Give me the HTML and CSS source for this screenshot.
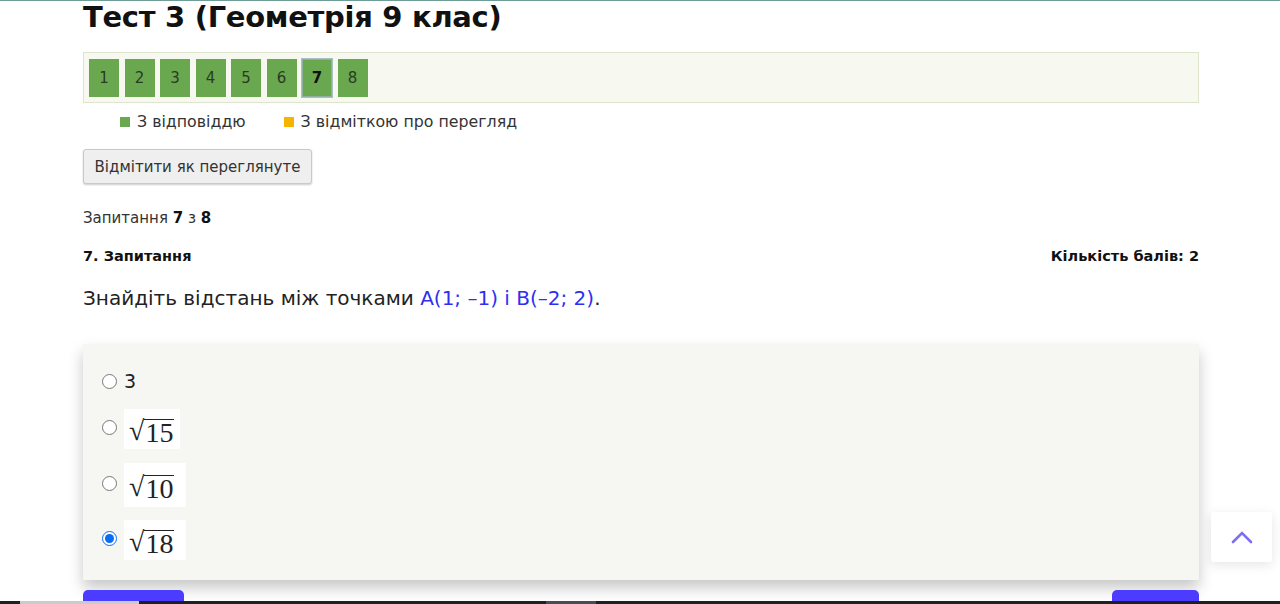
FILE: index.html
```html
<!DOCTYPE html>
<html lang="uk">
<head>
<meta charset="utf-8">
<title>Тест 3 (Геометрія 9 клас)</title>
<link rel="stylesheet" href="styles.css">
</head>
<body>
<div class="topline"></div>
<main class="page">
  <h1 class="title">Тест 3 (Геометрія 9 клас)</h1>
  <nav class="qnav">
    <span class="qbtn">1</span>
    <span class="qbtn">2</span>
    <span class="qbtn">3</span>
    <span class="qbtn">4</span>
    <span class="qbtn">5</span>
    <span class="qbtn">6</span>
    <span class="qbtn current">7</span>
    <span class="qbtn">8</span>
  </nav>
  <div class="legend">
    <span class="legend-item"><i class="sq green"></i>З відповіддю</span>
    <span class="legend-item"><i class="sq yellow"></i>З відміткою про перегляд</span>
  </div>
  <button class="mark">Відмітити як переглянуте</button>
  <p class="counter">Запитання <b>7</b> з <b>8</b></p>
  <div class="qhead">
    <b>7. Запитання</b>
    <b>Кількість балів: 2</b>
  </div>
  <p class="qtext">Знайдіть відстань між точками <span class="blue">A(1; –1) і B(–2; 2)</span>.</p>
  <div class="answers">
    <label class="ans first"><input type="radio" name="a"><span class="plain">3</span></label>
    <label class="ans a2"><input type="radio" name="a"><span class="math"><span class="rad">√</span><span class="under">15</span></span></label>
    <label class="ans a3"><input type="radio" name="a"><span class="math"><span class="rad">√</span><span class="under">10</span></span></label>
    <label class="ans a4"><input type="radio" name="a" checked><span class="math"><span class="rad">√</span><span class="under">18</span></span></label>
  </div>
  <div class="actions">
    <span class="pbtn left"></span>
    <span class="pbtn right"></span>
  </div>
</main>
<button class="totop" aria-label="Вгору">
  <svg width="22" height="14" viewBox="0 0 22 14"><path d="M2 12 L11 3 L20 12" fill="none" stroke="#7d6ff2" stroke-width="2.6" stroke-linecap="round"/></svg>
</button>
<div class="bottombar"><span class="thumb"></span><span class="thumb2"></span></div>
</body>
</html>
```
FILE: styles.css
```css
* { box-sizing: border-box; }
html, body { margin: 0; padding: 0; }
body {
  font-family: "DejaVu Sans", "Noto Sans", sans-serif;
  color: #222;
  background: #fff;
  height: 604px;
  overflow: hidden;
}
.topline {
  height: 1px;
  background: #6f9e98;
}
.page {
  width: 1116px;
  margin-left: 83px;
}
.title {
  margin: -4px 0 0 0;
  font-size: 29px;
  line-height: 40px;
  font-weight: bold;
  color: #111;
  letter-spacing: -0.3px;
}
.qnav {
  margin-top: 15px;
  height: 51px;
  border: 1px solid #dde5cc;
  background: #f7f9f0;
  display: flex;
  align-items: center;
  gap: 5.5px;
  padding: 0 5px;
}
.qbtn {
  width: 30px;
  height: 38px;
  background: #6aa84f;
  color: #2b3a24;
  font-size: 15px;
  display: flex;
  align-items: center;
  justify-content: center;
}
.qbtn.current {
  font-weight: bold;
  color: #111;
  outline: 1px solid #a9bfc4;
  box-shadow: inset 0 0 0 1px #8fb0a0;
}
.legend {
  display: flex;
  gap: 38px;
  padding-left: 37px;
  margin-top: 9px;
  font-size: 15.8px;
  color: #333;
  line-height: 20px;
}
.legend-item { display: flex; align-items: center; }
.sq { display: inline-block; width: 10px; height: 10px; margin-right: 7px; }
.sq.green { background: #6aa84f; }
.sq.yellow { background: #f5b400; }
.mark {
  display: block;
  margin-top: 17px;
  height: 35px;
  width: 229px;
  padding: 0;
  font-family: inherit;
  font-size: 15px;
  color: #333;
  background: #efefef;
  border: 1px solid #c9c9c9;
  border-radius: 3px;
  box-shadow: 0 1px 2px rgba(0,0,0,0.2);
}
.counter {
  margin: 24px 0 0;
  font-size: 15px;
  line-height: 20px;
  color: #333;
}
.counter b { color: #111; }
.qhead {
  display: flex;
  justify-content: space-between;
  margin-top: 18px;
  font-size: 14.5px;
  line-height: 20px;
  color: #111;
}
.qtext {
  margin: 17px 0 0;
  font-size: 20px;
  line-height: 30px;
  color: #222;
}
.blue { color: #2f2ff0; }
.answers {
  margin-top: 31px;
  height: 236px;
  background: #f6f7f3;
  box-shadow: 0 8px 14px rgba(0,0,0,0.22);
  padding: 24px 0 0 19px;
  display: flex;
  flex-direction: column;
}
.ans {
  display: flex;
  align-items: center;
}
.ans input {
  margin: 0 7px 0 0;
  width: 15px;
  height: 15px;
  accent-color: #0a6cf5;
}
.ans.first { height: 26px; }
.ans .plain { font-size: 19px; color: #222; }
.a2 input, .a3 input, .a4 input { margin-top: -4px; }
.a2 { margin-top: 15px; }
.a3 { margin-top: 14px; }
.a4 { margin-top: 13px; }
.math {
  background: #fff;
  font-family: "Liberation Serif", "DejaVu Serif", serif;
  font-size: 28px;
  color: #222;
  display: flex;
  align-items: flex-end;
  height: 40px;
  width: 56px;
  padding: 0 0 3px 5px;
}
.a3 .math { height: 44px; width: 62px; padding-bottom: 5px; }
.a4 .math { width: 62px; }
.rad { font-size: 28px; line-height: 30px; }
.under {
  border-top: 1.5px solid #222;
  line-height: 26px;
  padding: 0 1px;
}
.actions {
  margin-top: 10px;
  display: flex;
  justify-content: space-between;
}
.pbtn {
  display: block;
  height: 30px;
  background: #4b3cff;
  border-radius: 5px 5px 0 0;
}
.pbtn.left { width: 101px; }
.pbtn.right { width: 87px; }
.totop {
  position: fixed;
  left: 1211px;
  top: 512px;
  width: 61px;
  height: 50px;
  border: none;
  border-radius: 3px;
  background: #fff;
  box-shadow: 0 3px 12px rgba(0,0,0,0.1);
  display: flex;
  align-items: center;
  justify-content: center;
  padding: 0;
}
.bottombar {
  position: fixed;
  left: 0;
  bottom: 0;
  width: 1280px;
  height: 3px;
  background: #1f1f24;
}
.thumb {
  position: absolute;
  left: 20px;
  top: 0;
  width: 119px;
  height: 3px;
  background: #c9cbcf;
}
.thumb2 {
  position: absolute;
  left: 546px;
  top: 0;
  width: 50px;
  height: 3px;
  background: #4a4c52;
}
```
